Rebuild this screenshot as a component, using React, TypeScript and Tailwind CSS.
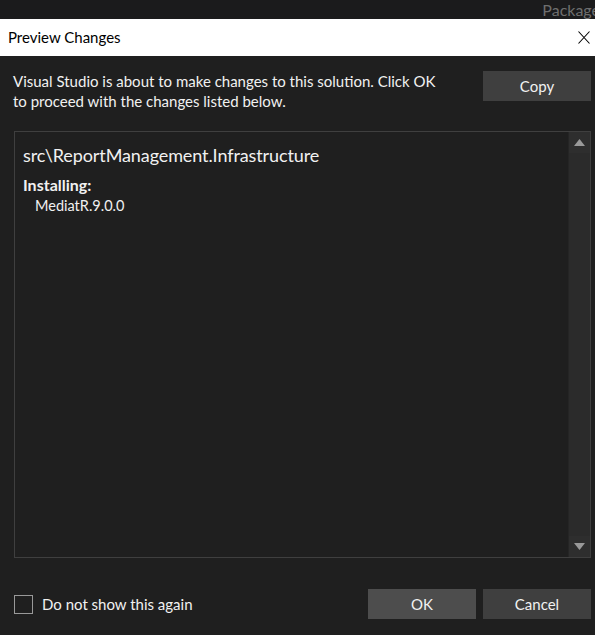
const font = { fontFamily: 'Lato, "Noto Sans", sans-serif' };

function ScrollArrow({ up }: { up?: boolean }) {
  return (
    <div className="h-[21px] flex items-center justify-center bg-[#2e2e2e]">
      <svg width="11" height="7" viewBox="0 0 11 7">
        {up ? <path d="M5.5 0 L11 7 L0 7 Z" fill="#999999" /> : <path d="M0 0 L11 0 L5.5 7 Z" fill="#999999" />}
      </svg>
    </div>
  );
}

export default function App() {
  return (
    <div className="w-[595px] h-[635px] flex flex-col bg-[#1f1f1f] text-[#f1f1f1] overflow-hidden" style={font}>
      <div className="h-[19px] bg-[#1b1b1c] flex justify-end items-center overflow-hidden">
        <span className="text-[16px] text-[#6e6e6e] mr-[-5px] leading-none">Package</span>
      </div>
      <div className="h-[37px] bg-white flex items-center justify-between pl-2 pr-[5px]">
        <span className="text-[15px] text-black">Preview Changes</span>
        <svg width="12" height="13" viewBox="0 0 12 13" className="text-black">
          <path d="M0.5 0.5 L11.5 12.5 M11.5 0.5 L0.5 12.5" stroke="currentColor" strokeWidth="1.1" fill="none" />
        </svg>
      </div>

      <div className="flex-1 flex flex-col pl-[14px] pr-[4px] pt-[15px]">
        <div className="flex justify-between">
          <p className="text-[15px] leading-[20px] w-[428px] -ml-px">
            Visual Studio is about to make changes to this solution. Click OK to proceed with the changes listed below.
          </p>
          <button className="w-[108px] h-[30px] bg-[#3f3f3f] text-[15px]">Copy</button>
        </div>

        <div className="mt-[20px] h-[427px] border border-[#3f3f3f] flex">
          <div className="flex-1 pl-[8px] pt-[11px]">
            <div className="text-[18px] leading-[24px] tracking-[-0.1px]">src\ReportManagement.Infrastructure</div>
            <div className="mt-[8px] text-[16px] leading-[20px] font-bold">Installing:</div>
            <div className="text-[14.5px] leading-[22px] pl-[12px]">MediatR.9.0.0</div>
          </div>
          <div className="w-[22px] flex flex-col bg-[#2b2b2b] border-l border-[#252525]">
            <ScrollArrow up />
            <div className="flex-1" />
            <ScrollArrow />
          </div>
        </div>

        <div className="mt-[31px] flex items-center">
          <div className="w-[19px] h-[19px] border border-[#999999]" />
          <span className="ml-[9px] text-[15px]">Do not show this again</span>
          <div className="flex-1" />
          <button className="w-[108px] h-[30px] bg-[#4d4d4d] text-[15px]">OK</button>
          <button className="ml-[7px] w-[108px] h-[30px] bg-[#3f3f3f] text-[15px]">Cancel</button>
        </div>
      </div>
    </div>
  );
}
